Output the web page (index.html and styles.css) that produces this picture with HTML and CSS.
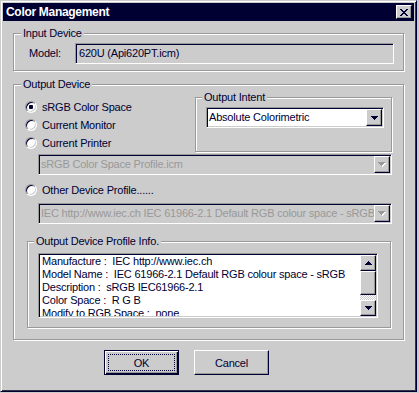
FILE: index.html
```html
<!DOCTYPE html>
<html lang="en">
<head>
    <meta charset="UTF-8">
    <meta name="viewport" content="width=device-width, initial-scale=1.0">
    <title>Color Management</title>
    <link rel="stylesheet" href="styles.css">
</head>
<body>
    <div class="window">
        <div class="titlebar">
            <span class="title">Color Management</span>
            <button class="close-button" aria-label="Close">
                <svg width="8" height="7" viewBox="0 0 8 7"><path d="M0 0h2v1h-2zM6 0h2v1h-2zM1 1h2v1h-2zM5 1h2v1h-2zM2 2h4v1h-4zM3 3h2v1h-2zM2 4h4v1h-4zM1 5h2v1h-2zM5 5h2v1h-2zM0 6h2v1h-2zM6 6h2v1h-2z" fill="#000033"/></svg>
            </button>
        </div>

        <div class="content">
            <fieldset class="group input-group">
                <legend>Input Device</legend>
                <div class="group-body input-body">
                    <span class="field-label">Model:</span>
                    <div class="textbox">620U (Api620PT.icm)</div>
                </div>
            </fieldset>

            <fieldset class="group output-group">
                <legend>Output Device</legend>
                <div class="group-body output-body">
                    <div class="output-top">
                        <div class="radio-list">
                            <label class="radio"><input type="radio" name="output" checked> sRGB Color Space</label>
                            <label class="radio"><input type="radio" name="output"> Current Monitor</label>
                            <label class="radio"><input type="radio" name="output"> Current Printer</label>
                        </div>
                        <fieldset class="group intent-group">
                            <legend>Output Intent</legend>
                            <div class="group-body intent-body">
                                <div class="combo">
                                    <span class="combo-text">Absolute Colorimetric</span>
                                    <span class="combo-button">
                                        <svg width="7" height="4" viewBox="0 0 7 4"><path d="M0 0h7v1h-1v1h-1v1h-1v1h-1v-1h-1v-1h-1v-1h-1z" fill="#000033"/></svg>
                                    </span>
                                </div>
                            </div>
                        </fieldset>
                    </div>

                    <div class="combo disabled printer-combo">
                        <span class="combo-text">sRGB Color Space Profile.icm</span>
                        <span class="combo-button">
                            <svg width="8" height="5" viewBox="0 0 8 5"><path d="M1 1h7v1h-1v1h-1v1h-1v1h-1v-1h-1v-1h-1v-1h-1z" fill="#ffffff"/><path d="M0 0h7v1h-1v1h-1v1h-1v1h-1v-1h-1v-1h-1v-1h-1z" fill="#999999"/></svg>
                        </span>
                    </div>

                    <label class="radio other-radio"><input type="radio" name="output"> Other Device Profile......</label>

                    <div class="combo disabled profile-combo">
                        <span class="combo-text">IEC http://www.iec.ch IEC 61966-2.1 Default RGB colour space - sRGB</span>
                        <span class="combo-button">
                            <svg width="8" height="5" viewBox="0 0 8 5"><path d="M1 1h7v1h-1v1h-1v1h-1v1h-1v-1h-1v-1h-1v-1h-1z" fill="#ffffff"/><path d="M0 0h7v1h-1v1h-1v1h-1v1h-1v-1h-1v-1h-1v-1h-1z" fill="#999999"/></svg>
                        </span>
                    </div>

                    <fieldset class="group info-group">
                        <legend>Output Device Profile Info.</legend>
                        <div class="group-body info-body">
                            <div class="listbox">
                                <div class="list-lines">
                                    <div class="list-line">Manufacture :  IEC http://www.iec.ch</div>
                                    <div class="list-line">Model Name :  IEC 61966-2.1 Default RGB colour space - sRGB</div>
                                    <div class="list-line">Description :  sRGB IEC61966-2.1</div>
                                    <div class="list-line">Color Space :  R G B</div>
                                    <div class="list-line">Modify to RGB Space :  none</div>
                                </div>
                                <div class="scrollbar">
                                    <span class="scroll-button">
                                        <svg width="7" height="4" viewBox="0 0 7 4"><path d="M3 0h1v1h1v1h1v1h1v1h-7v-1h1v-1h1v-1h1z" fill="#000033"/></svg>
                                    </span>
                                    <span class="scroll-thumb"></span>
                                    <span class="scroll-track"></span>
                                    <span class="scroll-button">
                                        <svg width="7" height="4" viewBox="0 0 7 4"><path d="M0 0h7v1h-1v1h-1v1h-1v1h-1v-1h-1v-1h-1v-1h-1z" fill="#000033"/></svg>
                                    </span>
                                </div>
                            </div>
                        </div>
                    </fieldset>
                </div>
            </fieldset>

            <div class="buttons">
                <button class="push-button default"><span class="focus-ring">OK</span></button>
                <button class="push-button">Cancel</button>
            </div>
        </div>
    </div>
</body>
</html>
```

FILE: styles.css
```css
body {
    margin: 0;
    background-color: #cccccc;
    font-family: "Liberation Sans", Arial, sans-serif;
    font-size: 11px;
    line-height: 13px;
    letter-spacing: -0.2px;
    color: #000033;
}

.window {
    box-sizing: border-box;
    width: 417px;
    height: 392px;
    padding: 2px;
    border: 1px solid;
    border-color: #cccccc #000033 #000033 #cccccc;
    box-shadow: inset 1px 1px #ffffff, inset -1px -1px #333344;
    background-color: #cccccc;
}

/* title bar */

.titlebar {
    display: flex;
    align-items: center;
    justify-content: space-between;
    height: 18px;
    padding: 0 2px 0 3px;
    background-color: #000033;
}

.title {
    color: white;
    font-weight: bold;
    font-size: 12px;
    letter-spacing: -0.3px;
}

.close-button {
    display: flex;
    align-items: center;
    justify-content: center;
    box-sizing: border-box;
    width: 16px;
    height: 14px;
    padding: 0;
    border: 1px solid;
    border-color: #ffffff #000033 #000033 #ffffff;
    box-shadow: inset -1px -1px #999999;
    background-color: #cccccc;
}

.content {
    padding: 0 10px;
}

/* group boxes */

.group {
    margin: 0;
    padding: 0;
    min-width: 0;
    border: 1px solid #999999;
    box-shadow: inset 1px 1px #ffffff, 1px 1px #ffffff;
}

.group legend {
    margin-left: 7px;
    padding: 0 2px;
    background-color: #cccccc;
}

.input-group {
    margin-top: 6px;
}

.input-body {
    display: flex;
    align-items: center;
    padding: 3px 9px 6px 15px;
}

.field-label {
    width: 46px;
}

.textbox {
    flex: 1;
    box-sizing: border-box;
    height: 21px;
    padding: 3px 3px 0;
    border: 1px solid;
    border-color: #999999 #ffffff #ffffff #999999;
    box-shadow: inset 1px 1px #000033, inset -1px -1px #cccccc;
    background-color: #cccccc;
    white-space: nowrap;
}

.output-group {
    margin-top: 7px;
}

.output-body {
    padding: 0 11px 11px 11px;
}

.output-top {
    display: flex;
}

.radio-list {
    flex: 1;
    padding-top: 7px;
}

.radio {
    display: flex;
    align-items: center;
    gap: 5px;
    height: 18px;
}

.radio input {
    appearance: none;
    box-sizing: border-box;
    width: 12px;
    height: 12px;
    margin: 0;
    border: 1px solid;
    border-color: #999999 #ffffff #ffffff #999999;
    border-radius: 50%;
    box-shadow: inset 1px 1px #000033, inset -1px -1px #cccccc;
    background-color: #ffffff;
}

.radio input:checked {
    background: radial-gradient(circle, #000033 0 2px, #ffffff 2.5px);
}

.intent-group {
    width: 195px;
}

.intent-group legend {
    margin-left: 6px;
}

.intent-body {
    padding: 3px 7px 9px 10px;
}

/* combo boxes */

.combo {
    display: flex;
    align-items: center;
    box-sizing: border-box;
    height: 21px;
    padding: 1px;
    border: 1px solid;
    border-color: #999999 #ffffff #ffffff #999999;
    box-shadow: inset 1px 1px #000033, inset -1px -1px #cccccc;
    background-color: #ffffff;
}

.combo-text {
    flex: 1;
    padding-left: 1px;
    overflow: hidden;
    white-space: nowrap;
}

.combo-button,
.scroll-button {
    display: flex;
    align-items: center;
    justify-content: center;
    box-sizing: border-box;
    width: 16px;
    height: 17px;
    border: 1px solid;
    border-color: #ffffff #000033 #000033 #ffffff;
    box-shadow: inset -1px -1px #999999;
    background-color: #cccccc;
}

.combo.disabled {
    background-color: #cccccc;
    color: #999999;
}

.printer-combo {
    margin: 2px 0 0 13px;
}

.other-radio {
    margin-top: 6px;
}

.profile-combo {
    margin: 4px 0 0 13px;
}

/* profile info */

.info-group {
    margin: 11px 1px 0 2px;
}

.info-group legend {
    margin-left: 6px;
}

.info-body {
    padding: 5px 12px 9px 10px;
}

.listbox {
    display: flex;
    box-sizing: border-box;
    height: 65px;
    border: 1px solid;
    border-color: #999999 #ffffff #ffffff #999999;
    box-shadow: inset 1px 1px #000033, inset -1px -1px #cccccc;
    background-color: #ffffff;
    padding: 1px;
}

.list-lines {
    flex: 1;
    min-width: 0;
    padding-left: 2px;
    overflow: hidden;
}

.list-line {
    white-space: pre;
}

.scrollbar {
    display: flex;
    flex-direction: column;
    flex-shrink: 0;
    width: 16px;
}

.scroll-button {
    height: 16px;
    flex-shrink: 0;
}

.scroll-thumb {
    box-sizing: border-box;
    flex-shrink: 0;
    height: 24px;
    border: 1px solid;
    border-color: #ffffff #000033 #000033 #ffffff;
    box-shadow: inset -1px -1px #999999;
    background-color: #cccccc;
}

.scroll-track {
    flex: 1;
    background: repeating-conic-gradient(#ffffff 0 25%, #cccccc 0 50%) 0 0 / 2px 2px;
}

/* push buttons */

.buttons {
    display: flex;
    gap: 15px;
    margin-top: 10px;
    padding-left: 91px;
}

.push-button {
    box-sizing: border-box;
    width: 75px;
    height: 25px;
    padding: 0;
    border: 1px solid;
    border-color: #ffffff #000033 #000033 #ffffff;
    box-shadow: inset -1px -1px #999999;
    background-color: #cccccc;
    font-family: inherit;
    font-size: 11px;
    letter-spacing: -0.2px;
    color: #000033;
}

.push-button.default {
    display: flex;
    padding: 3px;
    border-color: #000033;
    box-shadow: inset 1px 1px #ffffff, inset -1px -1px #000033, inset -2px -2px #999999;
}

.focus-ring {
    flex: 1;
    display: flex;
    align-items: center;
    justify-content: center;
    border: 1px dotted #000033;
}
```
